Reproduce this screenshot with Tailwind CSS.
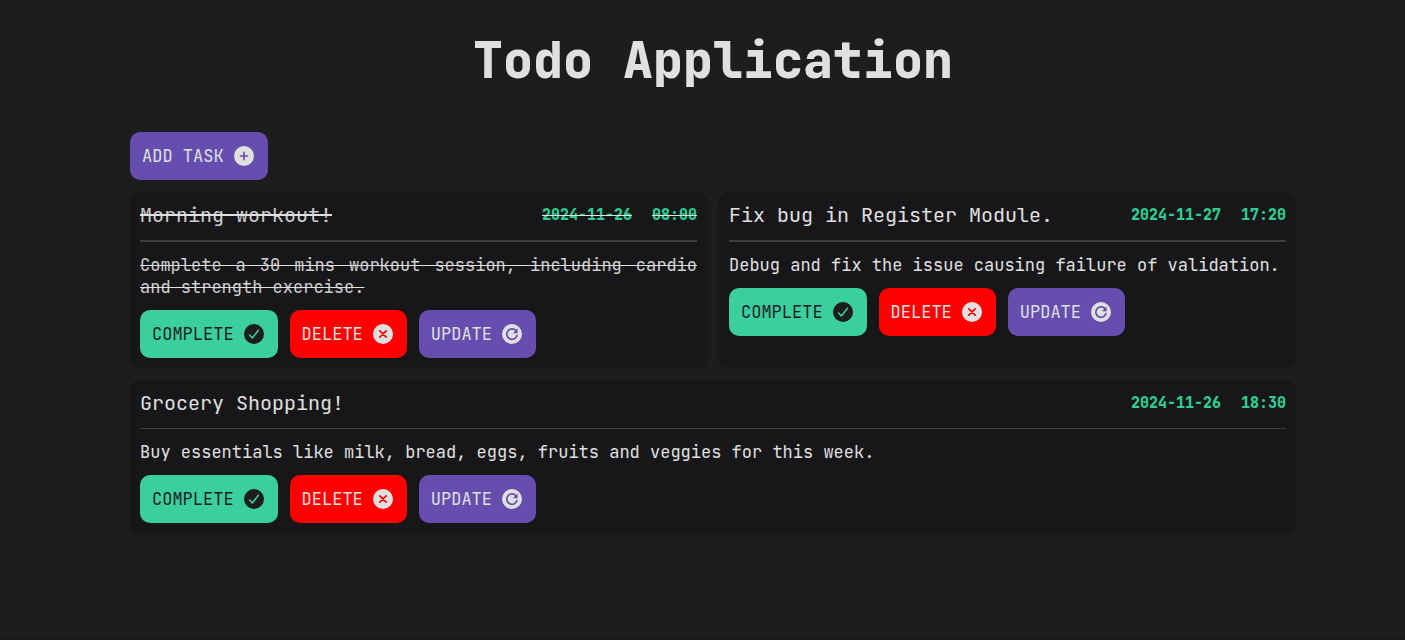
<!DOCTYPE html>
<html lang="en">
<head>
<meta charset="utf-8">
<meta name="viewport" content="width=device-width, initial-scale=1">
<title>Todo Application</title>
<script src="https://cdn.jsdelivr.net/npm/@tailwindcss/browser@4"></script>
</head>
<body class="min-h-screen border-b border-[#171719] bg-[#1d1d1e] font-['JetBrains_Mono','DejaVu_Sans_Mono',monospace] text-[17px] leading-[22px] text-[#e0e0e0]">
<svg class="hidden" aria-hidden="true">
  <symbol id="icon-add" viewBox="0 0 24 24">
    <circle cx="12" cy="12" r="10" fill="currentColor"/>
    <path d="M12 8.4v7.2M8.4 12h7.2" fill="none" stroke="#654eae" stroke-width="1.7" stroke-linecap="round"/>
  </symbol>
  <symbol id="icon-check" viewBox="0 0 24 24">
    <circle cx="12" cy="12" r="10" fill="currentColor"/>
    <path d="M7.6 13l2.8 3L16.4 8.2" fill="none" stroke="#3ccf9e" stroke-width="1.5" stroke-linecap="round" stroke-linejoin="round"/>
  </symbol>
  <symbol id="icon-cancel" viewBox="0 0 24 24">
    <circle cx="12" cy="12" r="10" fill="currentColor"/>
    <path d="M8.8 8.8l6.4 6.4M15.2 8.8l-6.4 6.4" fill="none" stroke="#ff0000" stroke-width="1.7" stroke-linecap="round"/>
  </symbol>
  <symbol id="icon-refresh" viewBox="0 0 24 24">
    <circle cx="12" cy="12" r="10" fill="currentColor"/>
    <path d="M16.4 9.3A5.2 5.2 0 1 0 17 13.6" fill="none" stroke="#654eae" stroke-width="1.7" stroke-linecap="round"/>
    <path d="M17.6 6.6v4.6h-4.6z" fill="#654eae"/>
  </symbol>
</svg>

<main class="px-4 pt-7 pb-10 lg:pr-[109px] lg:pl-[130px]">
  <h1 class="text-center text-[50px] leading-[64px] font-extrabold">Todo Application</h1>

  <button type="button" class="mt-10 flex h-12 items-center gap-2 rounded-[10px] bg-[#654eae] px-3">ADD TASK <svg class="size-6" aria-hidden="true"><use href="#icon-add"/></svg></button>

  <div class="mt-3 grid gap-3 lg:grid-cols-2">
    <article class="rounded-[10px] bg-[#171719] p-[10px] shadow-md shadow-black/5">
      <header class="flex items-center justify-between gap-5 border-b-2 border-[#3d3d3f] pb-3">
        <h2 class="text-[20px] leading-[26px] text-[#cfcfcf] line-through decoration-[#e0e0e0] decoration-2">Morning workout!</h2>
        <p class="flex gap-5 text-[15px] font-extrabold text-[#2fcb90]">
          <time class="line-through decoration-[#e0e0e0] decoration-1">2024-11-26</time>
          <time class="line-through decoration-[#e0e0e0] decoration-1">08:00</time>
        </p>
      </header>
      <p class="mt-3 text-justify text-[#cfcfcf] line-through decoration-[#e0e0e0] decoration-1">Complete a 30 mins workout session, including cardio and strength exercise.</p>
      <div class="mt-3 flex flex-wrap gap-3">
        <button type="button" class="flex h-12 items-center gap-2 rounded-[10px] bg-[#3ccf9e] px-3 text-[#1d1d1f]">COMPLETE <svg class="size-6" aria-hidden="true"><use href="#icon-check"/></svg></button>
        <button type="button" class="flex h-12 items-center gap-2 rounded-[10px] bg-[#ff0000] px-3">DELETE <svg class="size-6" aria-hidden="true"><use href="#icon-cancel"/></svg></button>
        <button type="button" class="flex h-12 items-center gap-2 rounded-[10px] bg-[#654eae] px-3">UPDATE <svg class="size-6" aria-hidden="true"><use href="#icon-refresh"/></svg></button>
      </div>
    </article>

    <article class="rounded-[10px] bg-[#171719] p-[10px] shadow-md shadow-black/5">
      <header class="flex items-center justify-between gap-5 border-b-2 border-[#3d3d3f] pb-3">
        <h2 class="text-[20px] leading-[26px]">Fix bug in Register Module.</h2>
        <p class="flex gap-5 text-[15px] font-extrabold text-[#2fcb90]">
          <time>2024-11-27</time>
          <time>17:20</time>
        </p>
      </header>
      <p class="mt-3 text-justify">Debug and fix the issue causing failure of validation.</p>
      <div class="mt-3 flex flex-wrap gap-3">
        <button type="button" class="flex h-12 items-center gap-2 rounded-[10px] bg-[#3ccf9e] px-3 text-[#1d1d1f]">COMPLETE <svg class="size-6" aria-hidden="true"><use href="#icon-check"/></svg></button>
        <button type="button" class="flex h-12 items-center gap-2 rounded-[10px] bg-[#ff0000] px-3">DELETE <svg class="size-6" aria-hidden="true"><use href="#icon-cancel"/></svg></button>
        <button type="button" class="flex h-12 items-center gap-2 rounded-[10px] bg-[#654eae] px-3">UPDATE <svg class="size-6" aria-hidden="true"><use href="#icon-refresh"/></svg></button>
      </div>
    </article>

    <article class="rounded-[10px] bg-[#171719] p-[10px] shadow-md shadow-black/5 lg:col-span-2">
      <header class="flex items-center justify-between gap-5 border-b border-[#3d3d3f] pb-3">
        <h2 class="text-[20px] leading-[26px]">Grocery Shopping!</h2>
        <p class="flex gap-5 text-[15px] font-extrabold text-[#2fcb90]">
          <time>2024-11-26</time>
          <time>18:30</time>
        </p>
      </header>
      <p class="mt-3 text-justify">Buy essentials like milk, bread, eggs, fruits and veggies for this week.</p>
      <div class="mt-3 flex flex-wrap gap-3">
        <button type="button" class="flex h-12 items-center gap-2 rounded-[10px] bg-[#3ccf9e] px-3 text-[#1d1d1f]">COMPLETE <svg class="size-6" aria-hidden="true"><use href="#icon-check"/></svg></button>
        <button type="button" class="flex h-12 items-center gap-2 rounded-[10px] bg-[#ff0000] px-3">DELETE <svg class="size-6" aria-hidden="true"><use href="#icon-cancel"/></svg></button>
        <button type="button" class="flex h-12 items-center gap-2 rounded-[10px] bg-[#654eae] px-3">UPDATE <svg class="size-6" aria-hidden="true"><use href="#icon-refresh"/></svg></button>
      </div>
    </article>
  </div>
</main>
</body>
</html>
